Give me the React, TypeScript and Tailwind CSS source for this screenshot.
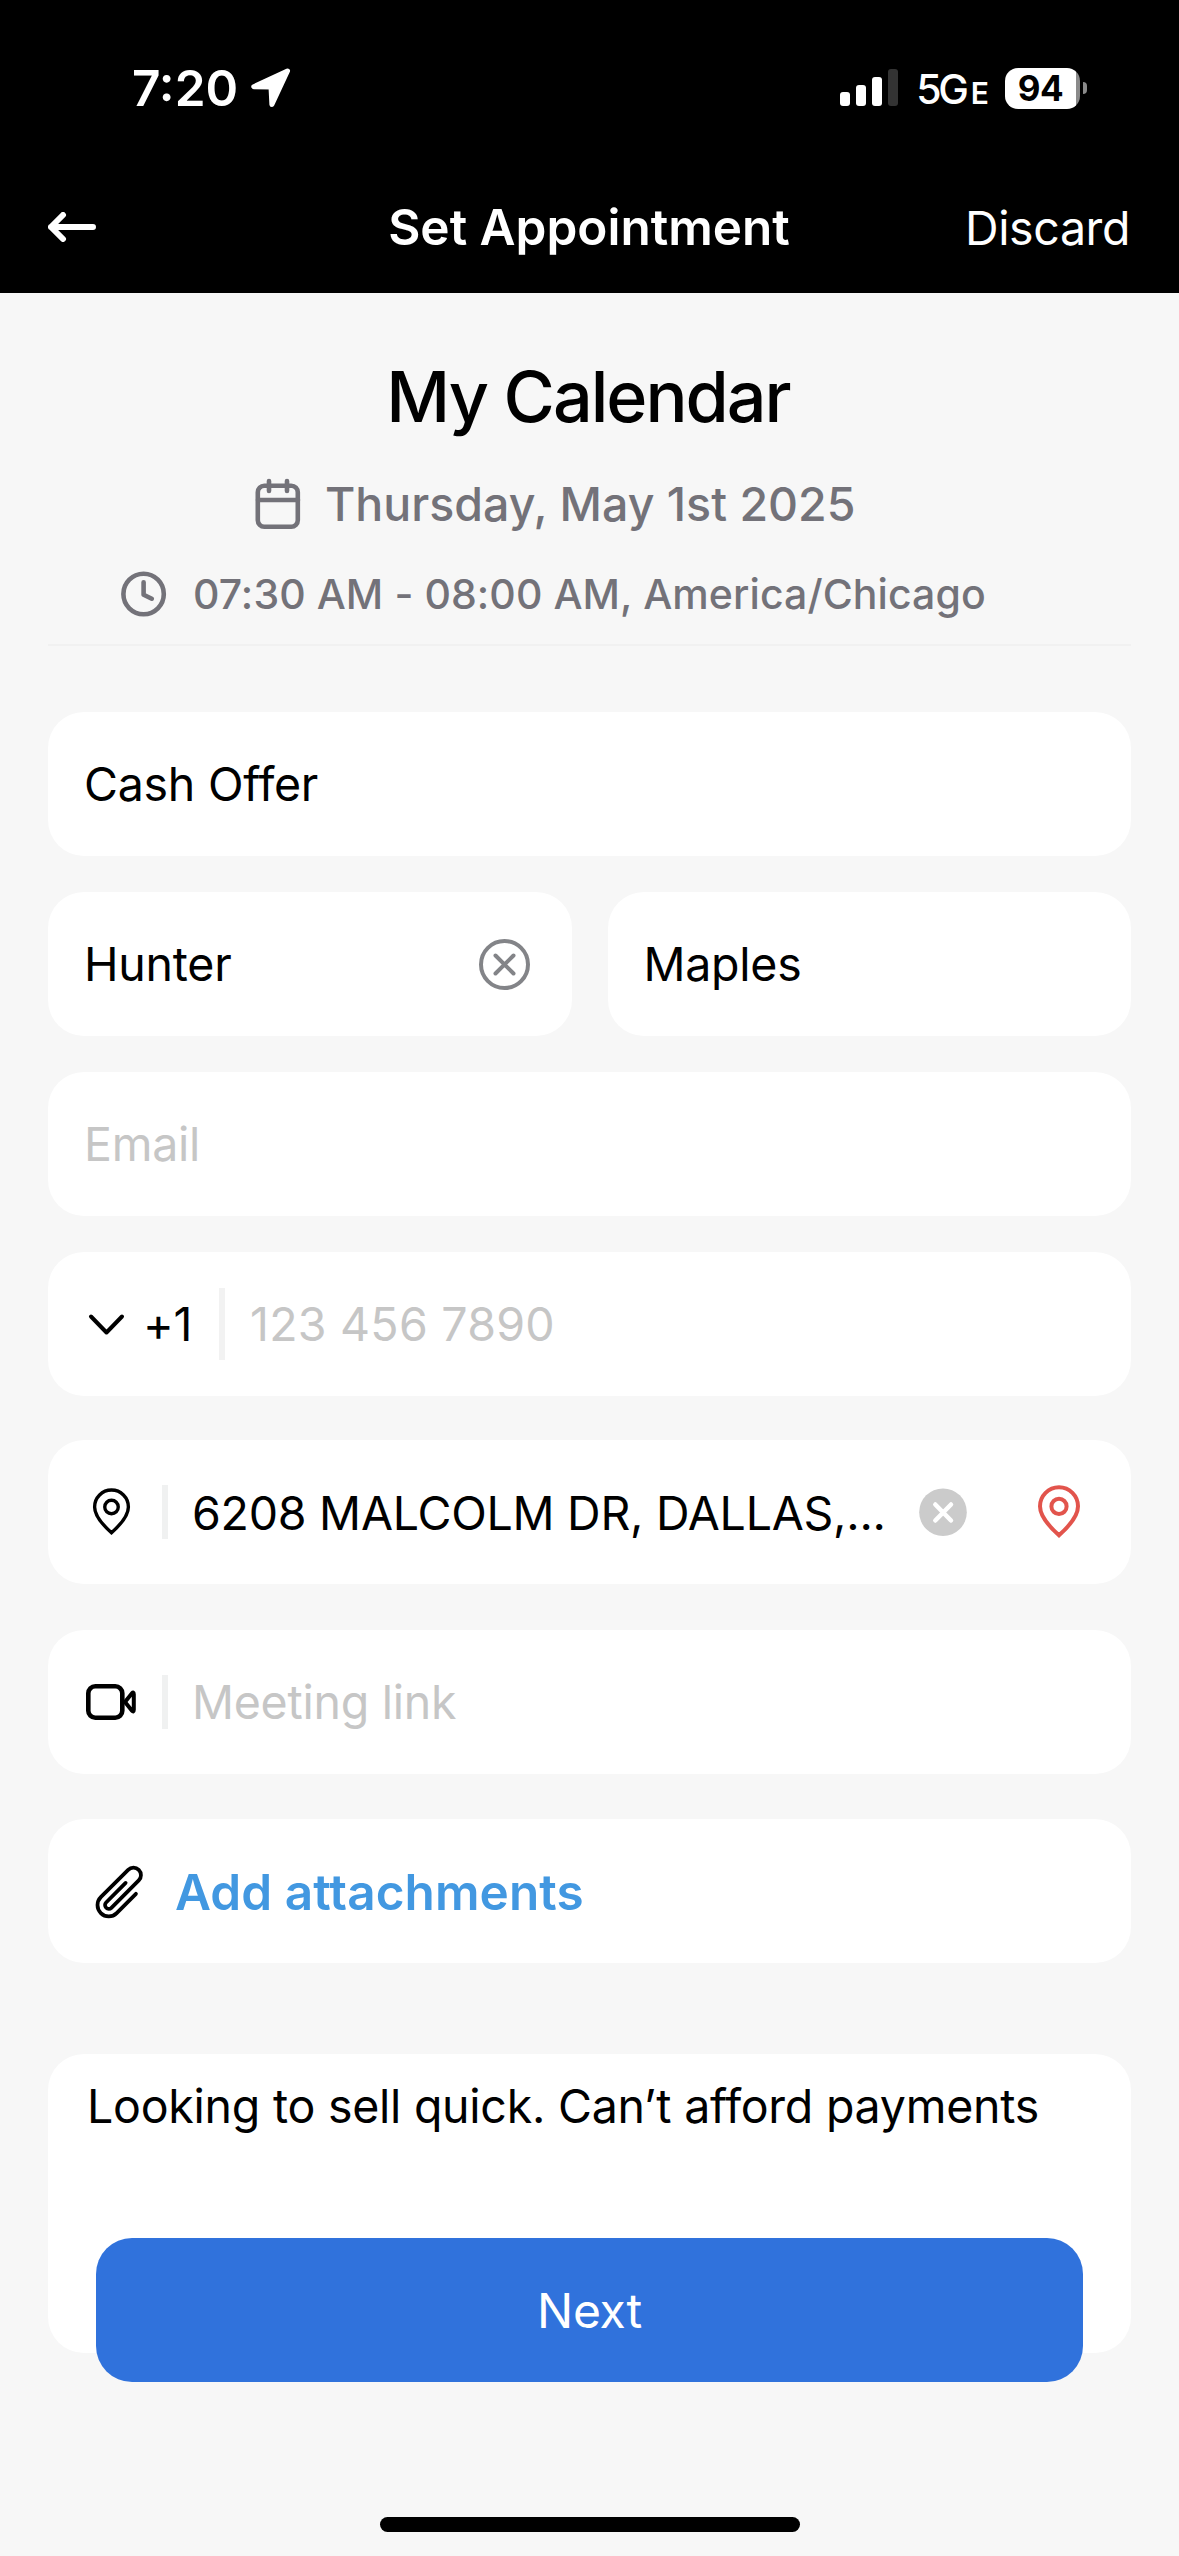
import { ReactNode } from "react"

type FieldProps = {
    children: ReactNode
    className?: string
}

function Field({ children, className = "" }: FieldProps) {
    return <div className={`flex h-36 items-center rounded-[36px] bg-white pl-9 ${className}`}>{children}</div>
}

function Pin({ className, strokeWidth }: { className: string; strokeWidth: number }) {
    return (
        <svg className={className} viewBox="0 0 48 54" fill="none" stroke="currentColor" strokeWidth={strokeWidth}>
            <path d="M24 50.3C13 40.5 5 31 5 21.3a19 19 0 0 1 38 0C43 31 35 40.5 24 50.3Z" />
            <circle cx="24" cy="21.4" r="7.6" />
        </svg>
    )
}

function StatusBar() {
    return (
        <div className="flex h-[161px] items-center pt-[15px] pr-[92px] pl-[132px] tracking-normal">
            <span className="pt-px text-[49.5px] font-semibold">7:20</span>
            <svg className="ml-[13px] h-[40px] w-[40px]" viewBox="0 0 40 40" fill="white" stroke="white" strokeWidth="5" strokeLinejoin="round">
                <path d="M36.5 3 2.8 18.7 20 18.9 20.9 36.5Z" />
            </svg>
            <div className="ml-auto flex items-center">
                <svg className="h-[38px] w-[58px]" viewBox="0 0 58 38" fill="white">
                    <rect x="0" y="23" width="10" height="14" rx="3" />
                    <rect x="16" y="16" width="10" height="21" rx="3" />
                    <rect x="32" y="8" width="10" height="29" rx="3" />
                    <rect x="48" y="0" width="10" height="37" rx="3" fill="#333" />
                </svg>
                <div className="ml-[18px] flex items-baseline pt-0.5">
                    <span className="text-[41px] font-medium tracking-[-3.2px]">5G</span>
                    <span className="ml-[5px] text-[30px] font-semibold">E</span>
                </div>
                <div className="ml-4 flex h-[41px] w-[75px] items-center justify-center rounded-[13px] bg-[linear-gradient(to_right,white_71px,#8a8a8a_71px)] pr-1 text-[35px] font-bold tracking-[-0.5px] text-black">
                    94
                </div>
                <div className="ml-[3px] h-3 w-1 rounded-r-full bg-[#8a8a8a]"></div>
            </div>
        </div>
    )
}

function App() {
    return (
        <div className="flex h-[2556px] w-[1179px] flex-col overflow-hidden bg-[#f7f7f7] font-['Inter',sans-serif] text-[46.5px] leading-none tracking-[-0.25px] whitespace-nowrap text-black">
            <header className="h-[293px] bg-black text-white">
                <StatusBar />
                <div className="flex h-[132px] items-center px-12">
                    <div className="flex-1">
                        <svg className="h-[30px] w-12" viewBox="0 0 48 30" fill="none" stroke="white" strokeWidth="6" strokeLinecap="round" strokeLinejoin="round">
                            <path d="M15 3 3 15l12 12M3 15h42" />
                        </svg>
                    </div>
                    <h1 className="pt-px text-[49.5px] font-semibold tracking-normal">Set Appointment</h1>
                    <div className="flex-1 pt-[3px] pr-px text-right tracking-[-0.4px]">Discard</div>
                </div>
            </header>

            <section className="mx-12 flex flex-col border-b-2 border-[#f1f1f1] pt-[62px] pb-5">
                <h2 className="pr-[3px] text-center text-[70px] leading-[84px] font-medium tracking-[-2px]">My Calendar</h2>
                <div className="mt-[35px] flex h-[60px] items-center pl-[207px] font-medium tracking-normal text-[#737279]">
                    <svg className="h-[52px] w-[46px]" viewBox="0 0 46 52" fill="none" stroke="currentColor" strokeWidth="4.6" strokeLinecap="round">
                        <rect x="2.8" y="7.8" width="40" height="41" rx="6.5" />
                        <path d="M3 22h40M14 3v10M32 3v10" />
                    </svg>
                    <span className="ml-6">Thursday, May 1st 2025</span>
                </div>
                <div className="mt-[30px] flex h-[60px] items-center pl-[73px] text-[41px] font-medium tracking-[0.08px] text-[#737279]">
                    <svg className="h-[46px] w-[46px]" viewBox="0 0 46 46" fill="none" stroke="currentColor" strokeWidth="4.6" strokeLinecap="round" strokeLinejoin="round">
                        <circle cx="22.6" cy="23" r="20.2" />
                        <path d="M22.6 11.3v12.4l8.2 4" />
                    </svg>
                    <span className="ml-[26px]">07:30 AM - 08:00 AM, America/Chicago</span>
                </div>
            </section>

            <main className="mt-[66px] flex flex-col px-12">
                <Field>Cash Offer</Field>
                <div className="mt-9 grid grid-cols-2 gap-9">
                    <Field className="justify-between pr-10">
                        Hunter
                        <svg className="h-[54px] w-[54px] text-[#838488]" viewBox="0 0 54 54" fill="none" stroke="currentColor" strokeWidth="4" strokeLinecap="round">
                            <circle cx="26.5" cy="27.5" r="23.5" />
                            <path d="m17.5 18.5 18 18m0-18-18 18" />
                        </svg>
                    </Field>
                    <Field>Maples</Field>
                </div>
                <Field className="mt-9 text-[#c6c6c6]">Email</Field>
                <Field className="mt-9">
                    <svg className="h-[24px] w-[45px]" viewBox="0 0 45 24" fill="none" stroke="black" strokeWidth="4" strokeLinecap="round" strokeLinejoin="round">
                        <path d="m7 4.5 15.5 16L38 4.5" />
                    </svg>
                    <span className="ml-3.5 w-[76px]">+1</span>
                    <div className="h-[72px] w-1.5 bg-[#f2f2f2]"></div>
                    <span className="ml-[25px] tracking-[0.25px] text-[#c6c6c6]">123 456 7890</span>
                </Field>
                <Field className="mt-11">
                    <div className="flex w-[54px] justify-center">
                        <Pin className="h-[48px] w-[43px]" strokeWidth={3.8} />
                    </div>
                    <div className="ml-6 h-[54px] w-1.5 bg-[#f0f1f1]"></div>
                    <span className="ml-6 pt-0.5">6208 MALCOLM DR, DALLAS,...</span>
                    <svg className="ml-auto h-12 w-12" viewBox="0 0 48 48" strokeWidth="4.5" strokeLinecap="round">
                        <circle cx="24" cy="24.2" r="23.8" fill="#cbcbcb" />
                        <path d="m16.3 16.5 15.7 16m0-16-15.7 16" stroke="white" />
                    </svg>
                    <Pin className="mr-12 ml-[68px] h-[54px] w-12 text-[#e2544c]" strokeWidth={4} />
                </Field>
                <Field className="mt-[46px]">
                    <svg className="h-[44px] w-[54px]" viewBox="0 0 54 44" fill="none" stroke="black" strokeWidth="4.6" strokeLinejoin="round">
                        <rect x="4.3" y="6.3" width="34" height="31.4" rx="7" />
                        <path d="m41 22 6.8-8.6q2-2 2 .8v15.6q0 2.8-2 .8Z" strokeWidth="4" />
                    </svg>
                    <div className="ml-6 h-[54px] w-1.5 bg-[#f0f1f1]"></div>
                    <span className="ml-6 text-[#c6c6c6]">Meeting link</span>
                </Field>
                <Field className="mt-[45px] pt-0.5">
                    <svg className="ml-1.5 h-[60px] w-[60px]" viewBox="0 0 24 24" fill="none" stroke="black" strokeWidth="1.5" strokeLinecap="round" strokeLinejoin="round">
                        <path d="m18.375 12.739-7.693 7.693a4.5 4.5 0 0 1-6.364-6.364l10.94-10.94A3 3 0 1 1 19.5 7.372L8.552 18.32m.009-.01-.01.01m5.699-9.941-7.81 7.81a1.5 1.5 0 0 0 2.112 2.13" />
                    </svg>
                    <span className="ml-[25px] pt-px text-[49.5px] font-semibold tracking-[0.08px] text-[#4298e1]">Add attachments</span>
                </Field>
                <div className="mt-[91px] h-[299px] rounded-[36px] bg-white pt-[29px] pl-[39px] leading-[46px]">
                    Looking to sell quick. Can’t afford payments
                </div>
                <button className="relative mx-12 -mt-[115px] h-36 rounded-[36px] bg-[#3072dc] pt-0.5 text-[48px] text-white">Next</button>
            </main>

            <div className="mx-auto mt-auto mb-6 h-[15px] w-[420px] rounded-full bg-black"></div>
        </div>
    )
}

export default App
